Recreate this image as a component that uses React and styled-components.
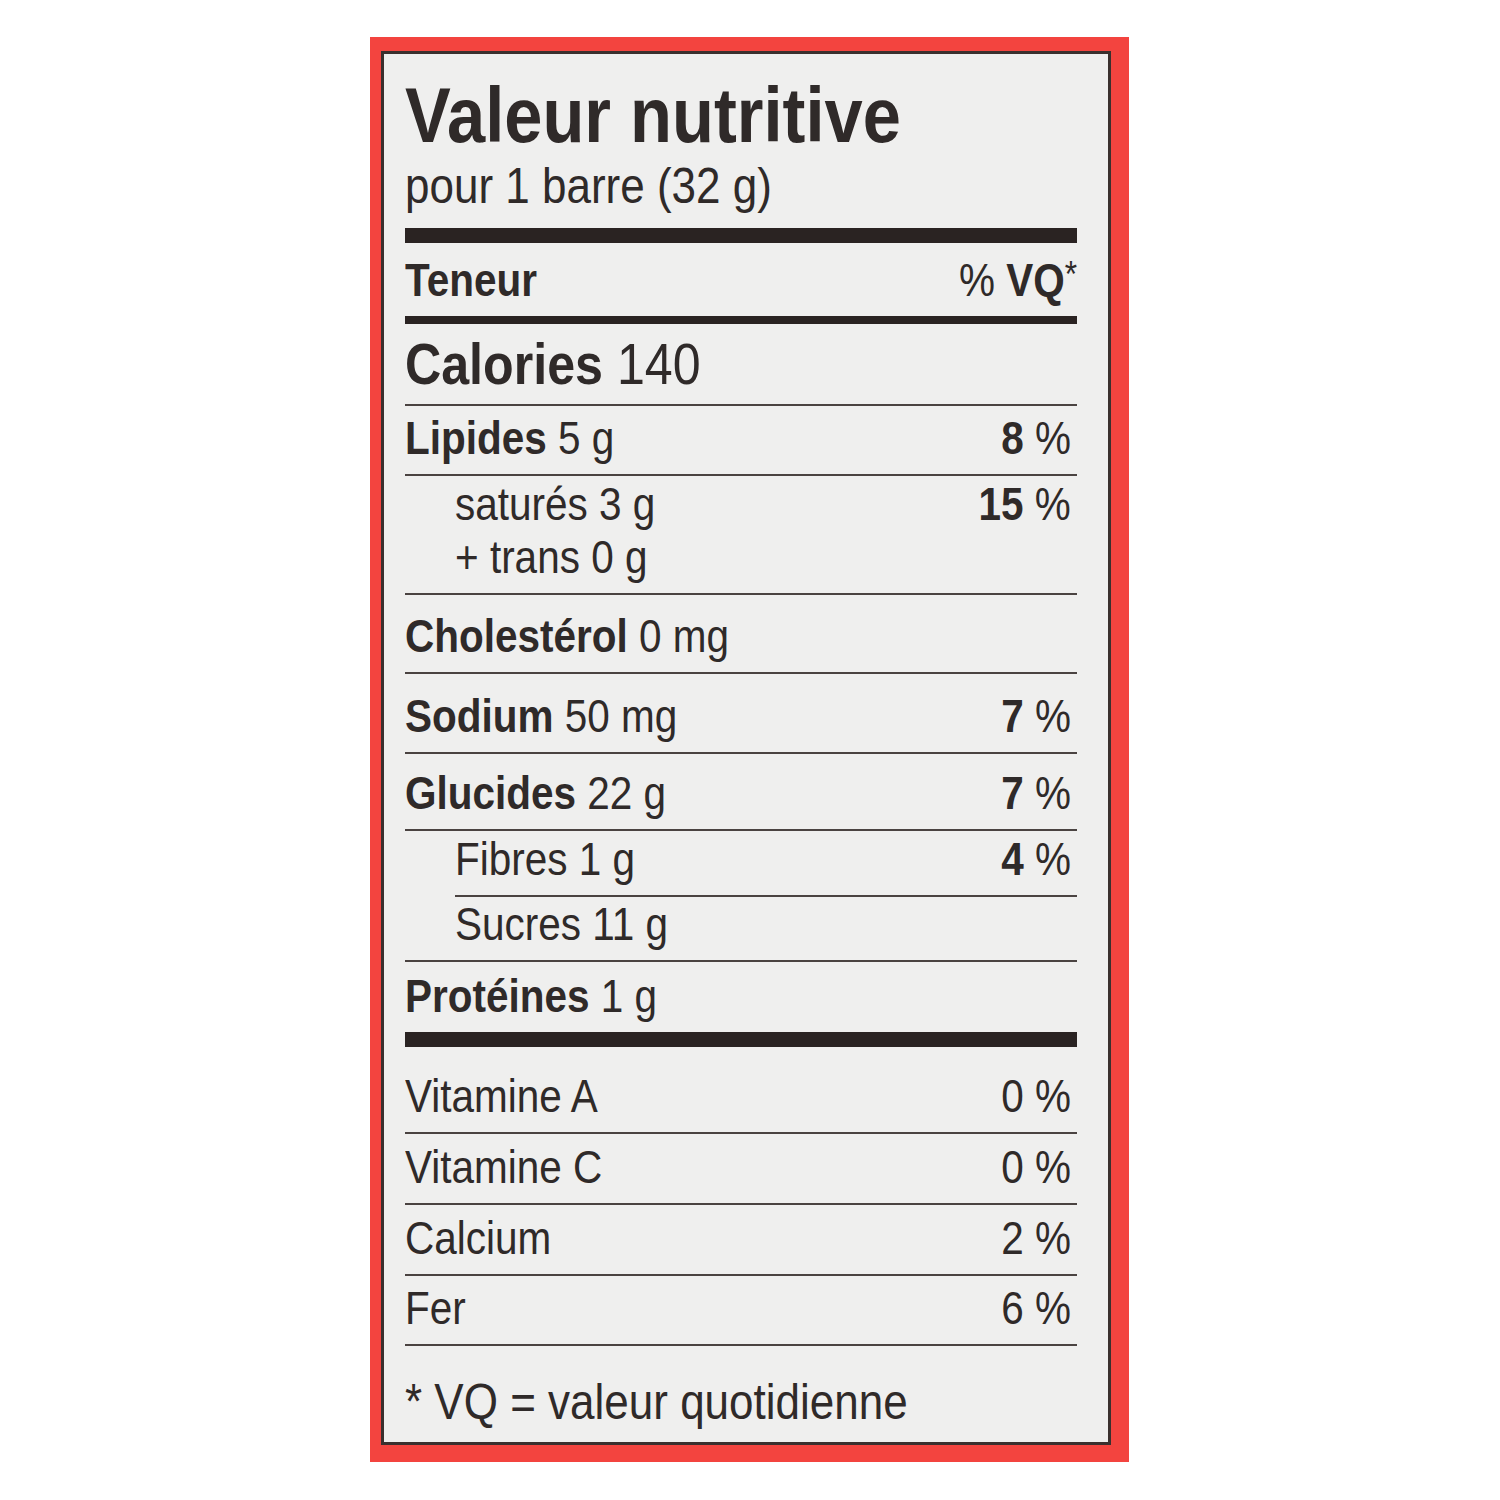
import React from 'react'
import styled, { createGlobalStyle } from 'styled-components'

const GlobalStyle = createGlobalStyle`
  body {
    margin: 0;
    background: #ffffff;
  }
`

const FONT = `"Liberation Sans", Arial, sans-serif`
const INK = '#2f2a29'
const NARROW = 0.88

const Page = styled.div`
  width: 1500px;
  height: 1500px;
  box-sizing: border-box;
  padding: 37px 0 0 370px;
  font-family: ${FONT};
  color: ${INK};
`

const Frame = styled.div`
  width: 759px;
  height: 1425px;
  box-sizing: border-box;
  background: #f3443f;
  padding: 14px 18px 17px 11px;
  display: flex;
`

const Panel = styled.div`
  flex: 1;
  border: 3px solid #3a302e;
  background: #efefee;
  padding: 22px 31px 0 21px;
  display: flex;
  flex-direction: column;
`

const Title = styled.h1`
  margin: 0;
  font-size: 78px;
  line-height: 1;
  font-weight: 700;
  white-space: nowrap;
  transform: scaleX(${NARROW});
  transform-origin: left bottom;
`

const Serving = styled.div`
  margin-top: 7px;
  font-size: 50px;
  line-height: 1;
  white-space: nowrap;
  transform: scaleX(${NARROW});
  transform-origin: left bottom;
`

const Bar = styled.div`
  height: ${({ size }) => size}px;
  background: #2a2322;
  margin-top: ${({ gap }) => gap || 0}px;
`

const Rule = styled.div`
  height: 2px;
  background: #4a4341;
  margin-left: ${({ indent }) => (indent ? 50 : 0)}px;
`

const Row = styled.div`
  height: ${({ h }) => h}px;
  box-sizing: border-box;
  display: flex;
  justify-content: space-between;
  align-items: flex-end;
  padding-bottom: ${({ pb }) => pb ?? 13}px;
  padding-left: ${({ indent }) => (indent ? 50 : 0)}px;
  font-size: ${({ size }) => size || 46}px;
  line-height: 1;
`

const Label = styled.span`
  display: inline-block;
  white-space: nowrap;
  transform: scaleX(${NARROW});
  transform-origin: left bottom;
`

const Strong = styled.b`
  font-weight: 700;
`

const Pct = styled.span`
  display: inline-block;
  padding-right: ${({ pad }) => pad ?? 7}px;
  white-space: nowrap;
  transform: scaleX(${NARROW});
  transform-origin: right bottom;
`

const Star = styled.span`
  font-weight: 400;
  font-size: 36px;
  vertical-align: 9px;
`

const Footnote = styled.div`
  margin-top: 31px;
  font-size: 50px;
  line-height: 1;
  white-space: nowrap;
  transform: scaleX(${NARROW});
  transform-origin: left bottom;
`

const nutrients = [
  { name: 'Lipides', amount: '5 g', pct: '8', h: 68, rule: 'full' },
  { name: 'saturés', amount: '3 g', pct: '15', h: 64, sub: true },
  { name: '+ trans', amount: '0 g', h: 53, sub: true, rule: 'full' },
  { name: 'Cholestérol', amount: '0 mg', h: 77, rule: 'full' },
  { name: 'Sodium', amount: '50 mg', pct: '7', h: 78, rule: 'full' },
  { name: 'Glucides', amount: '22 g', pct: '7', h: 75, rule: 'full' },
  { name: 'Fibres', amount: '1 g', pct: '4', h: 64, sub: true, rule: 'indent' },
  { name: 'Sucres', amount: '11 g', h: 63, sub: true, rule: 'full' },
  { name: 'Protéines', amount: '1 g', h: 70 },
]

const vitamins = [
  { name: 'Vitamine A', pct: '0', h: 85 },
  { name: 'Vitamine C', pct: '0', h: 69 },
  { name: 'Calcium', pct: '2', h: 69 },
  { name: 'Fer', pct: '6', h: 68 },
]

const App = () => {
  return (
    <Page>
      <GlobalStyle />
      <Frame>
        <Panel>
          <Title>Valeur nutritive</Title>
          <Serving>pour 1 barre (32 g)</Serving>
          <Bar size={15} gap={17} />
          <Row h={73} size={46}>
            <Label><Strong>Teneur</Strong></Label>
            <Pct pad={0}>% <Strong>VQ</Strong><Star>*</Star></Pct>
          </Row>
          <Bar size={8} />
          <Row h={80} size={57} pb={11}>
            <Label><Strong>Calories</Strong> 140</Label>
          </Row>
          <Rule />
          {nutrients.map((n) => (
            <React.Fragment key={n.name}>
              <Row h={n.h} indent={n.sub}>
                <Label>
                  {n.sub ? n.name : <Strong>{n.name}</Strong>} {n.amount}
                </Label>
                {n.pct && (
                  <Pct><Strong>{n.pct}</Strong> %</Pct>
                )}
              </Row>
              {n.rule && <Rule indent={n.rule === 'indent'} />}
            </React.Fragment>
          ))}
          <Bar size={15} />
          {vitamins.map((v) => (
            <React.Fragment key={v.name}>
              <Row h={v.h}>
                <Label>{v.name}</Label>
                <Pct>{v.pct} %</Pct>
              </Row>
              <Rule />
            </React.Fragment>
          ))}
          <Footnote>* VQ = valeur quotidienne</Footnote>
        </Panel>
      </Frame>
    </Page>
  )
}

export default App
